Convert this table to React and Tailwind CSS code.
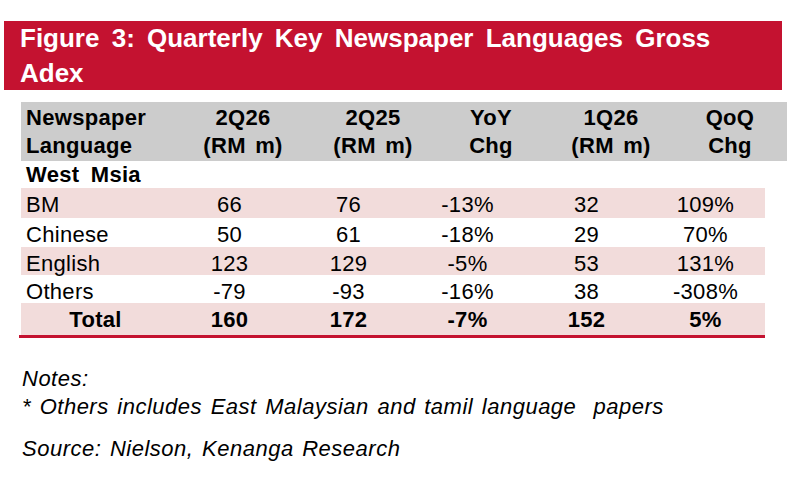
const rows = [
  { name: "BM", v: ["66", "76", "-13%", "32", "109%"], h: "h-[30px]", bg: "bg-[#f2dcdb]" },
  { name: "Chinese", v: ["50", "61", "-18%", "29", "70%"], h: "h-[29px]", bg: "bg-white" },
  { name: "English", v: ["123", "129", "-5%", "53", "131%"], h: "h-[28px]", bg: "bg-[#f2dcdb]" },
  { name: "Others", v: ["-79", "-93", "-16%", "38", "-308%"], h: "h-[28px]", bg: "bg-white" },
];

const heads = [
  ["2Q26", "(RM m)"],
  ["2Q25", "(RM m)"],
  ["YoY", "Chg"],
  ["1Q26", "(RM m)"],
  ["QoQ", "Chg"],
];

export default function App() {
  return (
    <div className="w-[795px] h-[486px] bg-white text-black font-['Liberation_Sans',Arial,sans-serif] pt-[21px] overflow-hidden">
      <div className="ml-[4px] w-[778px] h-[69px] bg-[#c41230] pl-[16px] text-white font-bold text-[26px] leading-[35px] [word-spacing:5px]">
        Figure 3: Quarterly Key Newspaper Languages Gross
        <br />
        Adex
      </div>

      <div className="mt-[12px] ml-[21px] w-[766px] bg-[#cccccc] grid grid-cols-[162px_120px_140px_96px_144px_94px_1fr] pt-[2px] pb-[1px] font-bold text-[22px] leading-[28px] tracking-[0.3px] [word-spacing:3px]">
        <div className="pl-[5px]">
          Newspaper
          <br />
          Language
        </div>
        {heads.map((h, i) => (
          <div key={i} className="text-center whitespace-nowrap">
            {h[0]}
            <br />
            {h[1]}
          </div>
        ))}
        <div />
      </div>

      <div className="ml-[21px] w-[744px] text-[22px] tracking-[0.3px]">
        <div className="h-[27px] leading-[27px] pl-[5px] font-bold [word-spacing:5px]">West Msia</div>
        {rows.map((r) => (
          <div key={r.name} className={`grid grid-cols-[149px_repeat(5,119px)] items-center ${r.h} ${r.bg}`}>
            <div className="pl-[5px]">{r.name}</div>
            {r.v.map((x, i) => (
              <div key={i} className="text-center">{x}</div>
            ))}
          </div>
        ))}
        <div className="grid grid-cols-[149px_repeat(5,119px)] items-center h-[32px] bg-[#f2dcdb] font-bold">
          <div className="text-center">Total</div>
          <div className="text-center">160</div>
          <div className="text-center">172</div>
          <div className="text-center">-7%</div>
          <div className="text-center">152</div>
          <div className="text-center">5%</div>
        </div>
      </div>
      <div className="ml-[19px] w-[746px] h-[3px] bg-[#c41230]" />

      <div className="mt-[27px] pl-[22px] italic text-[22px] leading-[28px] tracking-[0.5px] [word-spacing:2px]">
        <div>Notes:</div>
        <div className="whitespace-pre">* Others includes East Malaysian and tamil language  papers</div>
        <div className="mt-[14px]">Source: Nielson, Kenanga Research</div>
      </div>
    </div>
  );
}
